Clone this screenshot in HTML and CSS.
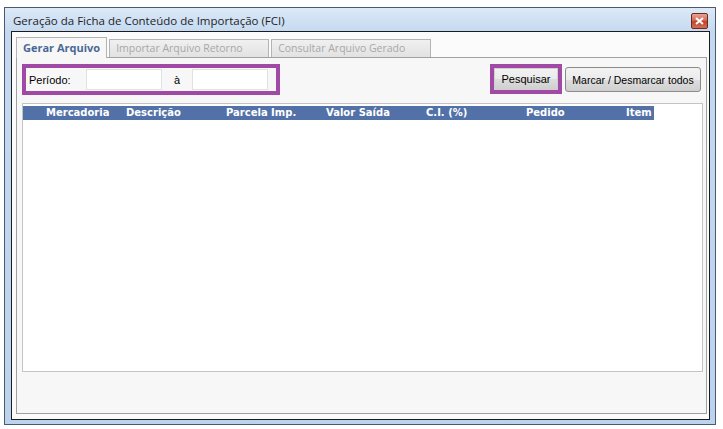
FILE: index.html
```html
<!DOCTYPE html>
<html>
<head>
    <title>Geração da Ficha de Conteúdo de Importação (FCI)</title>
    <link rel="stylesheet" href="styles.css">
</head>
<body>
    <div class="window">
        <div class="titlebar">
            <span class="title">Geração da Ficha de Conteúdo de Importação (FCI)</span>
            <span class="close-btn">
                <svg width="9" height="8" viewBox="0 0 9 8"><path d="M1 1 L8 7 M8 1 L1 7" stroke="#fff" stroke-width="2"/></svg>
            </span>
        </div>
        <div class="client">
            <div class="tabs">
                <div class="tab active">Gerar Arquivo</div>
                <div class="tab">Importar Arquivo Retorno</div>
                <div class="tab">Consultar Arquivo Gerado</div>
            </div>
            <div class="tab-page">
                <div class="toolbar">
                    <div class="periodo hl">
                        <label>Período:</label>
                        <input type="text" class="field">
                        <span class="ate">à</span>
                        <input type="text" class="field">
                    </div>
                    <div class="actions">
                        <div class="hl btn-wrap"><button class="btn">Pesquisar</button></div>
                        <button class="btn btn-marcar">Marcar / Desmarcar todos</button>
                    </div>
                </div>
                <div class="grid">
                    <div class="grid-head">
                        <span class="col c1">Mercadoria</span>
                        <span class="col">Descrição</span>
                        <span class="col">Parcela Imp.</span>
                        <span class="col">Valor Saída</span>
                        <span class="col">C.I. (%)</span>
                        <span class="col">Pedido</span>
                        <span class="col last">Item</span>
                    </div>
                </div>
            </div>
        </div>
    </div>
</body>
</html>
```

FILE: styles.css
```css
body {
    margin: 0;
    background-color: #ffffff;
    font-family: "Liberation Sans", Arial, sans-serif;
    font-size: 11px;
    color: #000000;
}
.window {
    margin: 7px 0 0 4px;
    width: 710px;
    height: 416px;
    border: 1px solid #4a5a6c;
    background: linear-gradient(to bottom, #dce9f7 0px, #c4d9f1 24px, #bcd3ee 100%);
    display: flex;
    flex-direction: column;
}
.titlebar {
    height: 23px;
    display: flex;
    align-items: center;
    justify-content: space-between;
    padding: 0 7px 0 8px;
}
.title {
    font-family: "Open Sans", "Noto Sans", sans-serif;
    font-size: 11.5px;
    color: #1e1e1e;
    padding-top: 1px;
}
.close-btn {
    width: 15px;
    height: 14px;
    border: 1px solid #6b2b22;
    border-radius: 2px;
    background: linear-gradient(to bottom, #e7a394 0%, #d36a54 45%, #c0432c 55%, #d2705a 100%);
    display: flex;
    align-items: center;
    justify-content: center;
    margin-top: 3px;
}
.client {
    flex: 1;
    margin: 0 5px 4px 6px;
    border: 1px solid #1c1c1c;
    background-color: #fbfbfb;
    padding: 4px 2px 5px 4px;
    display: flex;
    flex-direction: column;
}
.tabs {
    display: flex;
    align-items: flex-end;
    height: 21px;
    gap: 2px;
}
.tab {
    font-family: "Open Sans", "Noto Sans", sans-serif;
    font-size: 10.5px;
    color: #a8a8a8;
    background: linear-gradient(to bottom, #f0f0f0, #e2e2e2);
    border: 1px solid #b4b4b4;
    border-bottom: none;
    height: 17px;
    line-height: 17px;
    padding: 0 6px;
    width: 146px;
}
.tab.active {
    color: #4a6796;
    font-weight: bold;
    font-size: 11px;
    background: #f7f7f7;
    height: 20px;
    line-height: 19px;
    width: auto;
    padding: 0 6px;
    margin-bottom: -1px;
    position: relative;
    z-index: 1;
}
.tab-page {
    flex: 1;
    border: 1px solid #a0a0a0;
    background-color: #f7f7f7;
    padding: 6px 3px 41px 5px;
    display: flex;
    flex-direction: column;
}
.toolbar {
    display: flex;
    justify-content: space-between;
    align-items: flex-start;
    height: 39px;
}
.hl {
    border: 4px solid #a04aa6;
}
.periodo {
    display: flex;
    align-items: center;
    width: 247px;
    height: 23px;
    padding: 0 0 0 3px;
    font-size: 11px;
}
.periodo label {
    width: 57px;
}
.field {
    width: 74px;
    height: 19px;
    border: 1px solid #e2e2e2;
    background: #ffffff;
    padding: 0;
    margin: 0;
}
.ate {
    width: 30px;
    padding-left: 12px;
    box-sizing: border-box;
}
.actions {
    display: flex;
    align-items: flex-start;
    gap: 3px;
    margin-right: 2px;
}
.btn-wrap {
    display: flex;
    padding: 0;
}
.btn {
    font-family: "Liberation Sans", Arial, sans-serif;
    font-size: 11px;
    height: 25px;
    padding: 0 2px;
    white-space: nowrap;
    border: 1px solid #8a8a8a;
    border-radius: 3px;
    background: linear-gradient(to bottom, #f2f2f2 0%, #ebebeb 50%, #dddddd 51%, #cfcfcf 100%);
    color: #000000;
    margin-top: 3px;
}
.btn-marcar {
    width: 136px;
    font-size: 10.5px;
}
.btn-wrap .btn {
    margin: 0;
    width: 64px;
    height: 22px;
    border-color: #d0d0d0;
    border-radius: 0;
}
.grid {
    flex: 1;
    border: 1px solid #c4c4c4;
    background-color: #ffffff;
    padding: 2px 0 0 0;
}
.grid-head {
    display: flex;
    width: 631px;
    height: 14px;
    background-color: #5371a9;
    color: #ffffff;
    font-family: "DejaVu Sans", Verdana, sans-serif;
    font-weight: bold;
    font-size: 10px;
    line-height: 14px;
}
.col {
    width: 100px;
}
.col.c1 {
    width: 103px;
    padding-left: 23px;
    box-sizing: border-box;
}
.col.last {
    width: auto;
}
```
